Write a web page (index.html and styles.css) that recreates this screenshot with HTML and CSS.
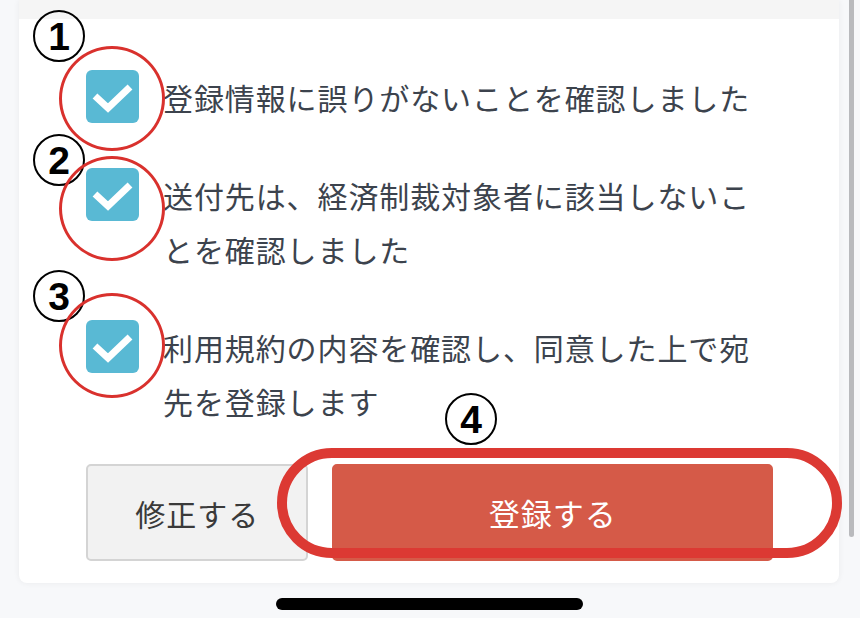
FILE: index.html
```html
<!doctype html>
<html lang="ja">
<head>
<meta charset="utf-8">
<meta name="viewport" content="width=device-width, initial-scale=1">
<title>宛先登録の確認</title>
<link rel="stylesheet" href="styles.css">
</head>
<body>
<div class="screen">
  <div class="card">
    <div class="card-top"></div>
    <div class="card-body">
      <ul class="agree-list">
        <li class="agree-item">
          <span class="check"><svg viewBox="0 0 53 53" width="53" height="53"><polyline points="9,26 22,38 44,17" /></svg></span>
          <span class="agree-text">登録情報に誤りがないことを確認しました</span>
          <span class="step step-1">1</span>
          <span class="ring ring-1"></span>
        </li>
        <li class="agree-item">
          <span class="check"><svg viewBox="0 0 53 53" width="53" height="53"><polyline points="9,26 22,38 44,17" /></svg></span>
          <span class="agree-text">送付先は、経済制裁対象者に該当しないことを確認しました</span>
          <span class="step step-2">2</span>
          <span class="ring ring-2"></span>
        </li>
        <li class="agree-item">
          <span class="check"><svg viewBox="0 0 53 53" width="53" height="53"><polyline points="9,26 22,38 44,17" /></svg></span>
          <span class="agree-text">利用規約の内容を確認し、同意した上で宛先を登録します</span>
          <span class="step step-3">3</span>
          <span class="ring ring-3"></span>
        </li>
      </ul>
      <div class="actions">
        <button class="btn btn-secondary">修正する</button>
        <button class="btn btn-primary">登録する</button>
        <span class="pill-mark"></span>
        <span class="step step-4">4</span>
      </div>
    </div>
  </div>
  <div class="home-bar"></div>
  <div class="scrollbar"></div>
</div>
</body>
</html>
```
FILE: styles.css
```css
* {
  box-sizing: border-box;
}

html, body {
  margin: 0;
  padding: 0;
  background-color: #f7f8fa;
  font-family: "Noto Sans CJK JP", "Noto Sans", sans-serif;
  overflow: hidden;
}

.screen {
  position: relative;
  width: 860px;
  height: 618px;
  padding-left: 19px;
}

.card {
  width: 820px;
  background-color: white;
  border-radius: 0 0 8px 8px;
  box-shadow: 0 0 6px rgba(0, 0, 0, 0.06);
}

.card-top {
  height: 19px;
  background-color: #f5f5f5;
}

.card-body {
  padding: 51px 66px 22px 67px;
}

/* checklist */
.agree-list {
  list-style: none;
  margin: 0;
  padding: 0;
  display: flex;
  flex-direction: column;
  gap: 44px;
}

.agree-item {
  position: relative;
  display: flex;
  align-items: flex-start;
  gap: 24px;
}

.check {
  flex: none;
  width: 53px;
  height: 53px;
  border-radius: 6px;
  background-color: #59b9d4;
}

.check svg {
  display: block;
}

.check polyline {
  fill: none;
  stroke: white;
  stroke-width: 7;
  stroke-linejoin: miter;
}

.agree-text {
  flex: 1;
  padding-right: 12px;
  font-size: 30px;
  line-height: 54px;
  letter-spacing: 0.9px;
  color: #3c434d;
}

/* buttons */
.actions {
  position: relative;
  display: flex;
  gap: 24px;
  margin-top: 36px;
}

.btn {
  height: 97px;
  padding: 0;
  border: 2px solid transparent;
  font-family: "Noto Sans CJK JP", sans-serif;
  font-size: 30px;
  letter-spacing: 1px;
  border-radius: 5px;
  cursor: pointer;
}

.btn-secondary {
  flex: 1 1 0;
  background-color: #f2f2f2;
  border-color: #d4d4d4;
  color: #3a3a3a;
}

.btn-primary {
  flex: 2 1 0;
  background-color: #d55a48;
  border-color: #d55a48;
  color: white;
  font-size: 31px;
}

/* annotations */
.step {
  position: absolute;
  width: 52px;
  height: 52px;
  border: 2px solid black;
  border-radius: 50%;
  display: flex;
  align-items: center;
  justify-content: center;
  font-family: "Liberation Sans", Arial, sans-serif;
  font-weight: bold;
  font-size: 39px;
  line-height: 1;
  color: black;
}

.step-1 { left: -53px; top: -60px; }
.step-2 { left: -53px; top: -34px; }
.step-3 { left: -53px; top: -50px; }
.step-4 { left: 359px; top: -71px; }

.ring {
  position: absolute;
  width: 106px;
  height: 105px;
  left: -27px;
  border: 3px solid #d9312d;
  border-radius: 50%;
}

.ring-1 { top: -24px; }
.ring-2 { top: -12px; }
.ring-3 { top: -27px; }

.pill-mark {
  position: absolute;
  left: 191px;
  top: -16px;
  width: 565px;
  height: 110px;
  border: 10px solid #dc3933;
  border-radius: 55px;
}

.home-bar {
  width: 307px;
  height: 12px;
  margin: 15px 0 0 257px;
  border-radius: 6px;
  background-color: black;
}

.scrollbar {
  position: absolute;
  top: 0;
  left: 849px;
  width: 5px;
  height: 537px;
  border-radius: 0 0 3px 3px;
  background-color: #b9babd;
}
```
